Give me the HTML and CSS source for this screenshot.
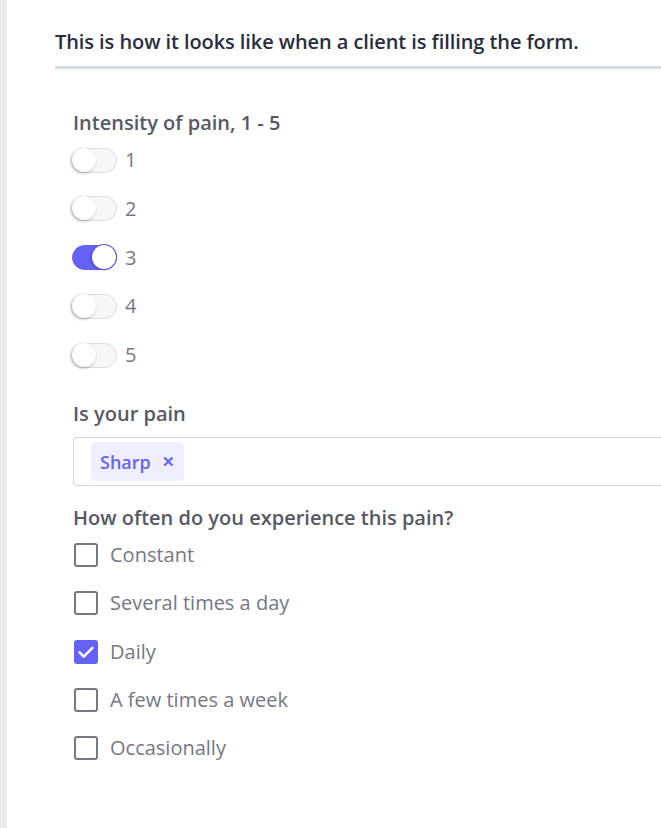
FILE: index.html
```html
<!DOCTYPE html>
<html>
<head>
<meta charset="utf-8">
<link rel="stylesheet" href="styles.css">
</head>
<body>
<div class="page">
  <aside class="rail"></aside>
  <main class="content">
    <h1 class="intro">This is how it looks like when a client is filling the form.</h1>
    <form class="form">
      <section class="field">
        <div class="label">Intensity of pain, 1 - 5</div>
        <div class="toggles">
          <label class="toggle-row"><span class="switch"><span class="knob"></span></span><span class="toggle-text">1</span></label>
          <label class="toggle-row"><span class="switch"><span class="knob"></span></span><span class="toggle-text">2</span></label>
          <label class="toggle-row"><span class="switch on"><span class="knob"></span></span><span class="toggle-text">3</span></label>
          <label class="toggle-row"><span class="switch"><span class="knob"></span></span><span class="toggle-text">4</span></label>
          <label class="toggle-row"><span class="switch"><span class="knob"></span></span><span class="toggle-text">5</span></label>
        </div>
      </section>
      <section class="field field-select">
        <div class="label">Is your pain</div>
        <div class="select">
          <span class="chip">Sharp <span class="chip-x">✕</span></span>
        </div>
      </section>
      <section class="field field-check">
        <div class="label">How often do you experience this pain?</div>
        <div class="checks">
          <label class="check-row"><span class="box"></span><span class="check-text">Constant</span></label>
          <label class="check-row"><span class="box"></span><span class="check-text">Several times a day</span></label>
          <label class="check-row"><span class="box checked"><svg viewBox="0 0 24 24" width="24" height="24"><path d="M5 12.5l4.5 4.5L19 7.5" fill="none" stroke="#fff" stroke-width="2.8" stroke-linecap="round" stroke-linejoin="round"/></svg></span><span class="check-text">Daily</span></label>
          <label class="check-row"><span class="box"></span><span class="check-text">A few times a week</span></label>
          <label class="check-row"><span class="box"></span><span class="check-text">Occasionally</span></label>
        </div>
      </section>
    </form>
  </main>
</div>
</body>
</html>
```
FILE: styles.css
```css
* { box-sizing: border-box; }
html, body { margin: 0; padding: 0; background: #fff; }
body { font-family: "Open Sans", "Noto Sans", sans-serif; overflow: hidden; }
.page { display: flex; min-height: 828px; }
.rail { width: 7px; flex: none; background: #ebebeb; }
.content { flex: 1; padding-left: 48px; padding-top: 28px; min-width: 0; }
.intro {
  margin: 0;
  font-size: 20px;
  font-weight: 600;
  color: #2b2e3a;
  line-height: 28px;
  padding-bottom: 10px;
  border-bottom: 3px solid #d4dde9;
  white-space: nowrap;
  letter-spacing: -0.08px;
}
.form { padding-left: 18px; padding-top: 42px; }
.label {
  font-size: 20px;
  font-weight: 600;
  color: #585862;
  line-height: 24px;
}
.toggles { display: flex; flex-direction: column; gap: 24.75px; padding-top: 13px; }
.toggle-row { display: flex; align-items: center; gap: 8px; height: 24px; }
.switch {
  position: relative;
  width: 45px; height: 25px;
  border-radius: 13px;
  background: #f7f7f7;
  border: 1px solid #dcdcdc;
  flex: none;
  margin-left: -1px;
}
.knob {
  position: absolute;
  top: -1px; left: -1px;
  width: 24px; height: 24px;
  border-radius: 50%;
  background: #fff;
  box-shadow: -1px 1px 3px rgba(0,0,0,0.35);
}
.switch.on { background: #6561f2; border-color: #6561f2; }
.switch.on .knob { left: 19px; box-shadow: 0 0 0 1px #5551e0, -1px 1px 2px rgba(0,0,0,0.3); }
.toggle-text { font-size: 20px; color: #787883; line-height: 24px; }
.field-select { padding-top: 35px; }
.select {
  margin-top: 11px;
  height: 49px;
  border: 1px solid #d6d6d6;
  border-right: none;
  border-radius: 4px 0 0 4px;
  padding: 4px 0 0 17px;
}
.chip {
  display: inline-flex;
  align-items: center;
  gap: 11px;
  height: 39px;
  padding: 0 9px 0 9px;
  background: #eeeefe;
  color: #6663ee;
  border-radius: 5px;
  font-size: 18px;
  font-weight: 600;
}
.chip-x { font-size: 15px; font-weight: 800; line-height: 1; }
.field-check { padding-top: 20px; }
.checks { display: flex; flex-direction: column; gap: 24.25px; padding-top: 13px; }
.check-row { display: flex; align-items: center; gap: 12px; height: 24px; }
.box {
  width: 24px; height: 24px;
  border: 2.5px solid #77777f;
  border-radius: 3px;
  flex: none;
  margin-left: 1px;
  display: flex; align-items: center; justify-content: center;
}
.box.checked { background: #6561f2; border-color: #6561f2; }
.box svg { width: 22px; height: 22px; flex: none; }
.check-text { font-size: 20px; color: #777782; line-height: 24px; }
```
